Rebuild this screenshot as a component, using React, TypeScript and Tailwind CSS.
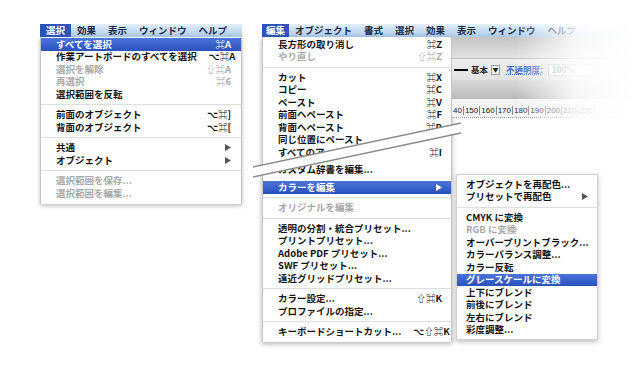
import React from 'react';

type Row = {
  label?: string;
  sc?: string;
  disabled?: boolean;
  active?: boolean;
  arrow?: boolean;
  sep?: boolean;
  space?: string;
};

const leftItems: Row[] = [
  { label: 'すべてを選択', sc: '⌘A', active: true },
  { label: '作業アートボードのすべてを選択', sc: '⌥⌘A' },
  { label: '選択を解除', sc: '⇧⌘A', disabled: true },
  { label: '再選択', sc: '⌘6', disabled: true },
  { label: '選択範囲を反転' },
  { sep: true },
  { label: '前面のオブジェクト', sc: '⌥⌘]' },
  { label: '背面のオブジェクト', sc: '⌥⌘[' },
  { sep: true },
  { label: '共通', arrow: true },
  { label: 'オブジェクト', arrow: true },
  { sep: true },
  { label: '選択範囲を保存...', disabled: true },
  { label: '選択範囲を編集...', disabled: true },
];

const editItems: Row[] = [
  { label: '長方形の取り消し', sc: '⌘Z' },
  { label: 'やり直し', sc: '⇧⌘Z', disabled: true },
  { sep: true },
  { label: 'カット', sc: '⌘X' },
  { label: 'コピー', sc: '⌘C' },
  { label: 'ペースト', sc: '⌘V' },
  { label: '前面へペースト', sc: '⌘F' },
  { label: '背面へペースト', sc: '⌘B' },
  { label: '同じ位置にペースト' },
  { label: 'すべてのア', sc: '⌘I' },
  { space: 'h-[4.5px]' },
  { label: 'カスタム辞書を編集...' },
  { space: 'h-[5.5px]' },
  { label: 'カラーを編集', active: true, arrow: true },
  { sep: true },
  { label: 'オリジナルを編集', disabled: true },
  { sep: true },
  { label: '透明の分割・統合プリセット...' },
  { label: 'プリントプリセット...' },
  { label: 'Adobe PDF プリセット...' },
  { label: 'SWF プリセット...' },
  { label: '遠近グリッドプリセット...' },
  { sep: true },
  { label: 'カラー設定...', sc: '⇧⌘K' },
  { label: 'プロファイルの指定...' },
  { sep: true },
  { label: 'キーボードショートカット...', sc: '⌥⇧⌘K' },
];

const colorItems: Row[] = [
  { label: 'オブジェクトを再配色...' },
  { label: 'プリセットで再配色', arrow: true },
  { sep: true },
  { label: 'CMYK に変換' },
  { label: 'RGB に変換', disabled: true },
  { label: 'オーバープリントブラック...' },
  { label: 'カラーバランス調整...' },
  { label: 'カラー反転' },
  { label: 'グレースケールに変換', active: true },
  { label: '上下にブレンド' },
  { label: '前後にブレンド' },
  { label: '左右にブレンド' },
  { label: '彩度調整...' },
];

const Arrow = ({ white }: { white?: boolean }) => (
  <svg width="6" height="7" viewBox="0 0 6 7">
    <path d="M0 0 L6 3.5 L0 7 Z" fill={white ? '#ffffff' : '#555555'} />
  </svg>
);

const MenuRows = ({ items, pl, pr }: { items: Row[]; pl: string; pr: string }) => (
  <>
    {items.map((it, i) => {
      if (it.sep) return <div key={i} className="my-[3.5px] h-px bg-[#dedede]" />;
      if (it.space) return <div key={i} className={it.space} />;
      const color = it.active ? 'text-white' : it.disabled ? 'text-[#a8a8a8]' : 'text-[#141414]';
      return (
        <div
          key={i}
          className={`flex h-[12.5px] items-center justify-between overflow-hidden whitespace-nowrap ${pl} ${pr} ${color} ${
            it.active ? 'bg-gradient-to-b from-[#4b74d9] to-[#2a51bd]' : ''
          }`}
        >
          <span>{it.label}</span>
          {it.sc && <span className="ml-3">{it.sc}</span>}
          {it.arrow && <Arrow white={it.active} />}
        </div>
      );
    })}
  </>
);

const MenuBar = ({ active, items, boxPad }: { active: string; items: string[]; boxPad: string }) => (
  <div className="flex h-[13px] items-center bg-gradient-to-b from-[#e3f0fb] to-[#a9caea] text-[#1e2946]">
    <span className={`flex h-full items-center bg-[#2d53b6] text-white ${boxPad}`}>{active}</span>
    {items.map((t) => (
      <span key={t} className="px-[6px]">
        {t}
      </span>
    ))}
  </div>
);

const Toolbar = () => (
  <div className="flex flex-col">
    <div className="h-[22px] bg-gradient-to-b from-[#c4c4c4] to-[#e3e3e3] border-b border-[#bdbdbd]" />
    <div className="flex h-[21px] items-center bg-gradient-to-b from-[#eeeeee] to-[#e2e2e2] pl-[2px] text-[8.5px] text-[#222]">
      <div className="h-[2px] w-[14px] bg-black" />
      <span className="ml-[3px]">基本</span>
      <span className="ml-[3px] flex h-[10px] w-[9px] items-center justify-center border border-[#999] bg-white text-[6px]">
        ▼
      </span>
      <span className="ml-[6px] text-[#3f64c8] underline decoration-dotted">不透明度:</span>
      <span className="ml-[5px] flex h-[12px] w-[50px] items-center border border-[#c8c8c8] bg-white pl-[3px] text-[#999]">
        100%
      </span>
    </div>
    <div className="h-[19px] bg-gradient-to-b from-[#d9d9d9] to-[#b9b9b9]" />
    <div className="flex h-[19px] items-end bg-[#f3f3f3] pb-[2px] border-b border-dotted border-[#999] font-['Liberation_Sans',sans-serif] text-[8px] font-normal text-[#222]">
      {['40', '150', '160', '170', '180', '190', '200', '210', '220'].map((n) => (
        <span key={n} className="border-r border-[#888] px-[1px] leading-[9px]">
          {n}
        </span>
      ))}
    </div>
  </div>
);

export default function App() {
  return (
    <div className="relative h-[370px] w-[635px] overflow-hidden bg-white font-['Noto_Sans_CJK_JP','DejaVu_Sans',sans-serif] text-[9.5px] font-bold leading-none">
      <div className="flex pl-[40px] pt-[24px]">
        {/* 選択 menu */}
        <div className="w-[202px]">
          <MenuBar active="選択" items={['効果', '表示', 'ウィンドウ', 'ヘルプ']} boxPad="px-[6px]" />
          <div className="border-x border-[#c4c4c4] bg-white pb-[4px] pt-px shadow-[0_2px_4px_rgba(0,0,0,0.25)]">
            <MenuRows items={leftItems} pl="pl-[15px]" pr="pr-[10px]" />
          </div>
        </div>

        {/* 編集 menu */}
        <div className="ml-[20px] flex-1">
          <MenuBar
            active="編集"
            items={['オブジェクト', '書式', '選択', '効果', '表示', 'ウィンドウ', 'ヘルプ']}
            boxPad="px-[4px]"
          />
          <div className="flex">
            <div className="w-[190px] border-x border-[#c4c4c4] bg-white pb-[4px] pt-px shadow-[0_2px_5px_rgba(0,0,0,0.3)]">
              <MenuRows items={editItems} pl="pl-[15px]" pr="pr-[9px]" />
            </div>
            <div className="flex flex-1 flex-col">
              <Toolbar />
              <div className="ml-[4px] mt-[56px] w-[142px] border border-[#d0d0d0] bg-white pb-[3px] pt-[3px] shadow-[0_2px_5px_rgba(0,0,0,0.25)]">
                <MenuRows items={colorItems} pl="pl-[9px]" pr="pr-[9px]" />
              </div>
            </div>
          </div>
        </div>
      </div>

      {/* fade of the background window to the right */}
      <div className="pointer-events-none absolute left-[515px] top-[20px] h-[102px] w-[120px] bg-gradient-to-r from-white/0 via-white/85 to-white" />

      {/* break lines across the edit menu */}
      <svg className="pointer-events-none absolute left-0 top-0" width="635" height="370">
        <polygon points="253,167 461,123 461,133 253,177" fill="#ffffff" />
        <line x1="253" y1="167" x2="461" y2="123" stroke="#8c8c8c" strokeWidth="1.4" />
        <line x1="253" y1="177" x2="461" y2="133" stroke="#8c8c8c" strokeWidth="1.4" />
      </svg>
    </div>
  );
}
